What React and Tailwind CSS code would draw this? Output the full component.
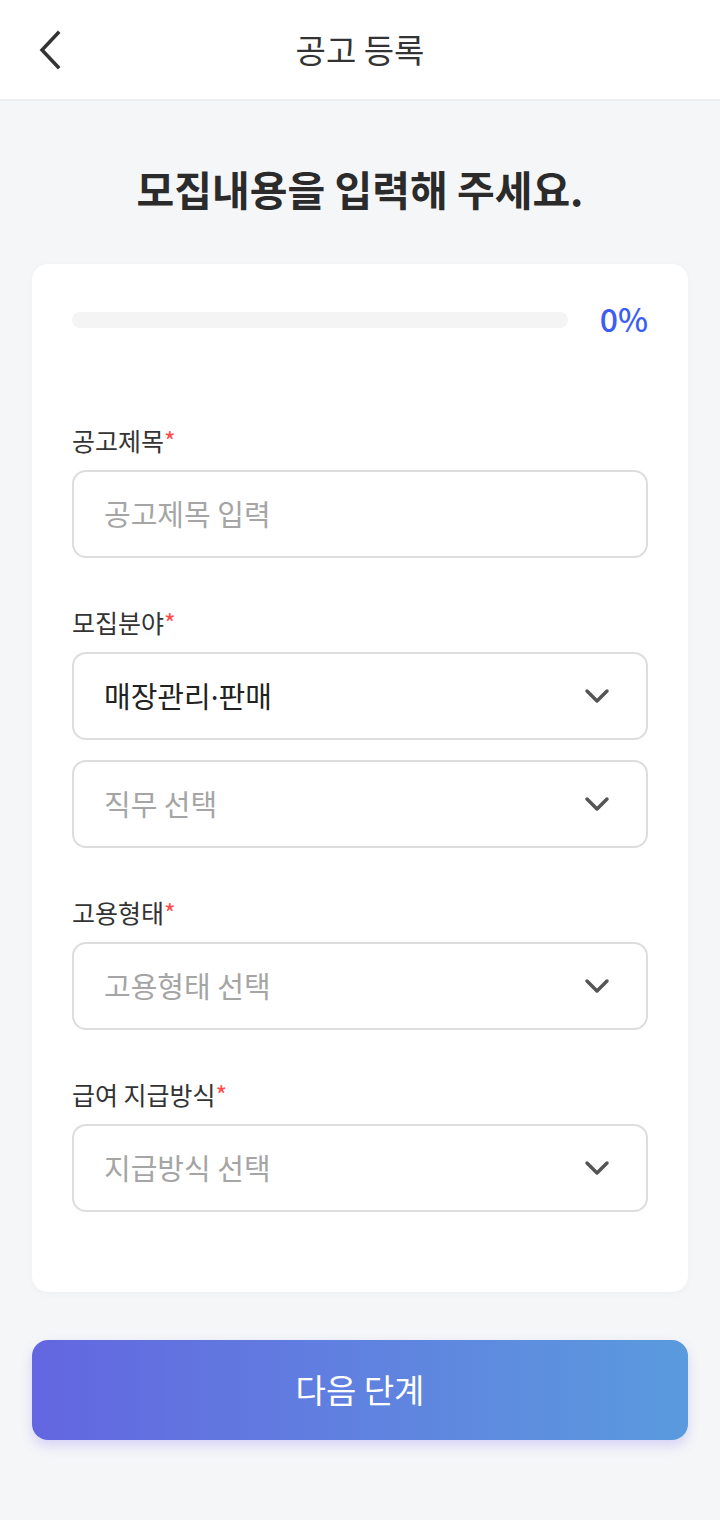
import React from "react";

const font = { fontFamily: '"Noto Sans CJK KR", "Noto Sans", sans-serif' };

function Chevron() {
  return (
    <svg width="26" height="16" viewBox="0 0 26 16" fill="none" className="shrink-0">
      <path d="M3 3 L13 13 L23 3" stroke="#555555" strokeWidth="3.5" strokeLinecap="round" strokeLinejoin="round" />
    </svg>
  );
}

function Label({ children }) {
  return (
    <div className="text-[25px] leading-[30px] text-[#333333]">
      {children}
      <span className="text-[#ff4b4b]">*</span>
    </div>
  );
}

function Select({ value, placeholder }) {
  return (
    <div className="h-[88px] rounded-[14px] border-2 border-[#dddddd] bg-white flex items-center justify-between pl-[30px] pr-[36px]">
      {value ? (
        <span className="text-[29px] text-[#222222]">{value}</span>
      ) : (
        <span className="text-[29px] text-[#a5a5a5]">{placeholder}</span>
      )}
      <Chevron />
    </div>
  );
}

export default function App() {
  return (
    <div style={font} className="w-[720px] min-h-[1520px] bg-[#f5f6f8] flex flex-col">
      <header className="h-[101px] bg-white border-b-2 border-[#eeeeef] flex items-center relative shrink-0">
        <button className="absolute left-[34px] top-[28px] w-[30px] h-[44px] flex items-center justify-center">
          <svg width="24" height="40" viewBox="0 0 24 40" fill="none">
            <path d="M21 3 L5 20 L21 37" stroke="#333333" strokeWidth="3.5" strokeLinecap="square" strokeLinejoin="miter" />
          </svg>
        </button>
        <h1 className="w-full text-center text-[33px] text-[#333333]">공고 등록</h1>
      </header>

      <main className="px-8 flex flex-col">
        <h2 className="mt-[63px] text-center text-[41px] leading-[48px] font-bold text-[#2b2b2b]">
          모집내용을 입력해 주세요.
        </h2>

        <section className="mt-[52px] bg-white rounded-[16px] shadow-[0_2px_8px_rgba(0,0,0,0.03)] px-10 pt-[40px] pb-[80px] flex flex-col">
          <div className="h-[32px] flex items-center gap-[32px]">
            <div className="flex-1 h-[16px] rounded-full bg-[#f4f4f5]" />
            <span className="text-[32px] font-medium text-[#3d5ef5] leading-none mb-[5px]">0%</span>
          </div>

          <div className="mt-[89px]">
            <Label>공고제목</Label>
          </div>
          <div className="mt-[15px] h-[88px] rounded-[14px] border-2 border-[#dddddd] bg-white flex items-center pl-[30px]">
            <span className="text-[29px] text-[#a5a5a5]">공고제목 입력</span>
          </div>

          <div className="mt-[49px]">
            <Label>모집분야</Label>
          </div>
          <div className="mt-[15px] flex flex-col gap-[20px]">
            <Select
              value={
                <>
                  매장관리<span style={{ fontFamily: '"Noto Sans", sans-serif' }}>·</span>판매
                </>
              }
            />
            <Select placeholder="직무 선택" />
          </div>

          <div className="mt-[49px]">
            <Label>고용형태</Label>
          </div>
          <div className="mt-[15px]">
            <Select placeholder="고용형태 선택" />
          </div>

          <div className="mt-[49px]">
            <Label>급여 지급방식</Label>
          </div>
          <div className="mt-[15px]">
            <Select placeholder="지급방식 선택" />
          </div>
        </section>

        <button className="mt-[48px] h-[100px] rounded-[16px] bg-gradient-to-r from-[#6366e0] to-[#5a9ade] shadow-[0_6px_12px_rgba(120,110,240,0.25)] flex items-center justify-center">
          <span className="text-[33px] text-white">다음 단계</span>
        </button>
      </main>
    </div>
  );
}
